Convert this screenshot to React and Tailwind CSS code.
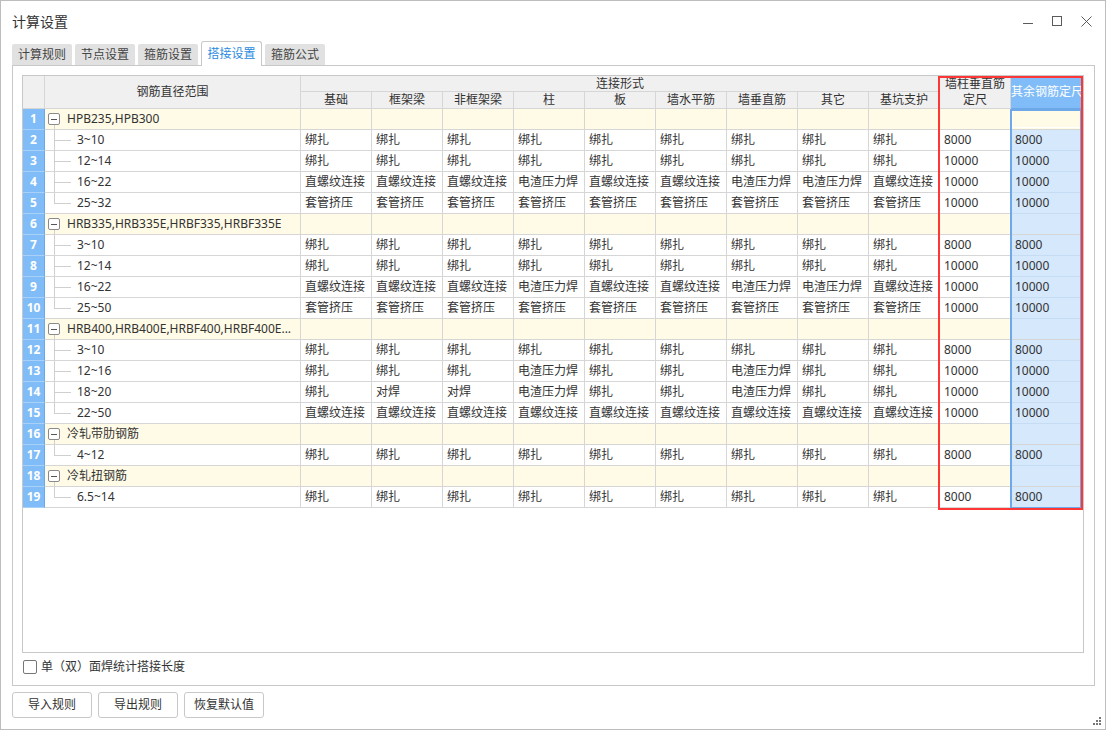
import React from 'react';

const FONT = { fontFamily: '"Noto Sans", "Noto Sans CJK SC", sans-serif' };

const tabs = ['计算规则', '节点设置', '箍筋设置', '搭接设置', '箍筋公式'];
const heads = ['基础', '框架梁', '非框架梁', '柱', '板', '墙水平筋', '墙垂直筋', '其它', '基坑支护'];

const B = '绑扎';
const Z = '直螺纹连接';
const D = '电渣压力焊';
const T = '套管挤压';
const H = '对焊';

const all = (v) => Array(9).fill(v);
const mixA = [Z, Z, Z, D, Z, Z, D, D, Z];

// g = group row, c = child row
const rows = [
  { g: 'HPB235,HPB300' },
  { c: '3~10', v: all(B), a: '8000', b: '8000' },
  { c: '12~14', v: all(B), a: '10000', b: '10000' },
  { c: '16~22', v: mixA, a: '10000', b: '10000' },
  { c: '25~32', v: all(T), a: '10000', b: '10000', last: true },
  { g: 'HRB335,HRB335E,HRBF335,HRBF335E' },
  { c: '3~10', v: all(B), a: '8000', b: '8000' },
  { c: '12~14', v: all(B), a: '10000', b: '10000' },
  { c: '16~22', v: mixA, a: '10000', b: '10000' },
  { c: '25~50', v: all(T), a: '10000', b: '10000', last: true },
  { g: 'HRB400,HRB400E,HRBF400,HRBF400E...' },
  { c: '3~10', v: all(B), a: '8000', b: '8000' },
  { c: '12~16', v: [B, B, B, D, B, B, D, B, B], a: '10000', b: '10000' },
  { c: '18~20', v: [B, H, H, D, B, B, D, B, B], a: '10000', b: '10000' },
  { c: '22~50', v: all(Z), a: '10000', b: '10000', last: true },
  { g: '冷轧带肋钢筋' },
  { c: '4~12', v: all(B), a: '8000', b: '8000', last: true },
  { g: '冷轧扭钢筋' },
  { c: '6.5~14', v: all(B), a: '8000', b: '8000', last: true },
];

const cell = 'border-r border-b border-[#d6d6d6] flex items-center whitespace-nowrap';
const headCell = 'border-r border-b border-[#d6d6d6] bg-[#f0f0f0] flex items-center justify-center text-center';

function RowNum({ n }) {
  return (
    <div className="border-r border-b border-r-[#6aa8ea] border-b-[#a9d1f8] bg-[#80bcf7] text-white font-bold flex items-center justify-center">
      {n}
    </div>
  );
}

function RangeCell({ row }) {
  if (row.g) {
    return (
      <div className={`${cell} relative bg-[#fffbe6] pl-[22px]`}>
        <span className="absolute left-[3px] top-[4px] w-[12px] h-[12px] border border-[#8a8a8a] rounded-[2px] bg-white flex items-center justify-center">
          <span className="w-[6px] h-px bg-[#555]" />
        </span>
        <span className="absolute left-[9px] top-[16px] bottom-0 w-px bg-[#cfcfcf]" />
        <span>{row.g}</span>
      </div>
    );
  }
  return (
    <div className={`${cell} relative pl-[32px]`}>
      <span className={`absolute left-[9px] top-0 w-px bg-[#cfcfcf] ${row.last ? 'h-[10px]' : 'h-full'}`} />
      <span className="absolute left-[9px] top-[10px] w-[17px] h-px bg-[#cfcfcf]" />
      {row.c}
    </div>
  );
}

function Grid() {
  return (
    <div className="relative">
      <div className="grid grid-cols-[22px_256px_repeat(9,71px)_71px_72px] grid-rows-[16px_17px_repeat(19,21px)] text-[12px] text-[#333] leading-[16px]">
        <div className={`${headCell} row-span-2`} />
        <div className={`${headCell} row-span-2`}>钢筋直径范围</div>
        <div className={`${headCell} col-span-9`}>连接形式</div>
        <div className={`${headCell} row-span-2 flex-col`}>
          <span>墙柱垂直筋</span>
          <span>定尺</span>
        </div>
        <div className="row-span-2 border-b border-[#6aa8ea] bg-[#80bcf7] text-white flex items-center justify-center whitespace-nowrap">
          其余钢筋定尺
        </div>
        {heads.map((h) => (
          <div key={h} className={headCell}>{h}</div>
        ))}

        {rows.map((row, i) => (
          <React.Fragment key={i}>
            <RowNum n={i + 1} />
            <RangeCell row={row} />
            {row.g ? (
              <>
                {Array.from({ length: 10 }).map((_, k) => (
                  <div key={k} className={`${cell} bg-[#fffbe6]`} />
                ))}
                {i === 0 ? (
                  <div className="border-b border-[#d6d6d6] bg-[#fffbe6] p-px">
                    <div className="w-full h-full border border-white" />
                  </div>
                ) : (
                  <div className={`${cell} bg-[#d5e8fc] border-r-0`} />
                )}
              </>
            ) : (
              <>
                {row.v.map((v, k) => (
                  <div key={k} className={`${cell} pl-[4px]`}>{v}</div>
                ))}
                <div className={`${cell} pl-[4px]`}>{row.a}</div>
                <div className="border-b border-[#c5dcf3] bg-[#d5e8fc] flex items-center pl-[4px]">{row.b}</div>
              </>
            )}
          </React.Fragment>
        ))}
      </div>

      {/* selected column frame */}
      <div className="absolute left-[987px] top-[33px] w-[72px] h-[400px] border-2 border-[#6ea8e8] pointer-events-none" />
      {/* red highlight */}
      <div className="absolute left-[915px] top-0 w-[145px] h-[434px] border-2 border-[#ff3636] pointer-events-none" />
    </div>
  );
}

function WinControls() {
  return (
    <div className="flex items-center gap-[17px] pr-[12px] text-[#5a5a5a]">
      <svg width="12" height="12" viewBox="0 0 12 12">
        <line x1="1" y1="8.5" x2="11" y2="8.5" stroke="currentColor" strokeWidth="1" />
      </svg>
      <svg width="12" height="12" viewBox="0 0 12 12">
        <rect x="1.5" y="1.5" width="9" height="9" fill="none" stroke="currentColor" strokeWidth="1" />
      </svg>
      <svg width="13" height="13" viewBox="0 0 13 13">
        <path d="M1.5 1.5 L11.5 11.5 M11.5 1.5 L1.5 11.5" stroke="currentColor" strokeWidth="1" />
      </svg>
    </div>
  );
}

function Btn({ children }) {
  return (
    <button className="w-[80px] h-[26px] border border-[#c8c8c8] rounded-[3px] bg-white text-[12px] text-[#333]">
      {children}
    </button>
  );
}

export default function App() {
  return (
    <div className="relative w-[1106px] h-[730px] bg-white border border-[#bdbdbd] flex flex-col" style={FONT}>
      <div className="h-[40px] flex items-center justify-between pl-[11px]">
        <span className="text-[14px] text-[#333]">计算设置</span>
        <WinControls />
      </div>

      <div className="h-[24px] flex items-end gap-[3px] pl-[11px]">
        {tabs.map((t) =>
          t === '搭接设置' ? (
            <div
              key={t}
              className="relative z-10 -mb-px h-[25px] w-[61px] bg-white border border-b-0 border-[#c8c8c8] rounded-t-[3px] flex items-center justify-center text-[12px] text-[#2b8ae0]"
            >
              {t}
            </div>
          ) : (
            <div
              key={t}
              className="h-[21px] w-[60px] bg-[#e1e1e1] rounded-t-[2px] flex items-center justify-center text-[12px] text-[#444]"
            >
              {t}
            </div>
          )
        )}
      </div>

      <div className="ml-[11px] mr-[10px] h-[621px] border border-[#c8c8c8] pt-[9px] pl-[9px] pr-[10px] flex flex-col">
        <div className="h-[578px] border border-[#c8c8c8]">
          <Grid />
        </div>
        <div className="h-[32px] pt-[7px] pl-[1px] flex items-start gap-[4px] text-[12px] text-[#333]">
          <span className="w-[14px] h-[14px] border border-[#777] rounded-[2px] bg-white" />
          <span className="leading-[14px]">单（双）面焊统计搭接长度</span>
        </div>
      </div>

      <div className="mt-[6px] ml-[11px] flex gap-[6px]">
        <Btn>导入规则</Btn>
        <Btn>导出规则</Btn>
        <Btn>恢复默认值</Btn>
      </div>

      <svg className="absolute right-[3px] bottom-[3px]" width="9" height="9" viewBox="0 0 9 9" fill="#777">
        <rect x="6" y="0" width="2" height="2" />
        <rect x="3" y="3" width="2" height="2" />
        <rect x="6" y="3" width="2" height="2" />
        <rect x="0" y="6" width="2" height="2" />
        <rect x="3" y="6" width="2" height="2" />
        <rect x="6" y="6" width="2" height="2" />
      </svg>
    </div>
  );
}
